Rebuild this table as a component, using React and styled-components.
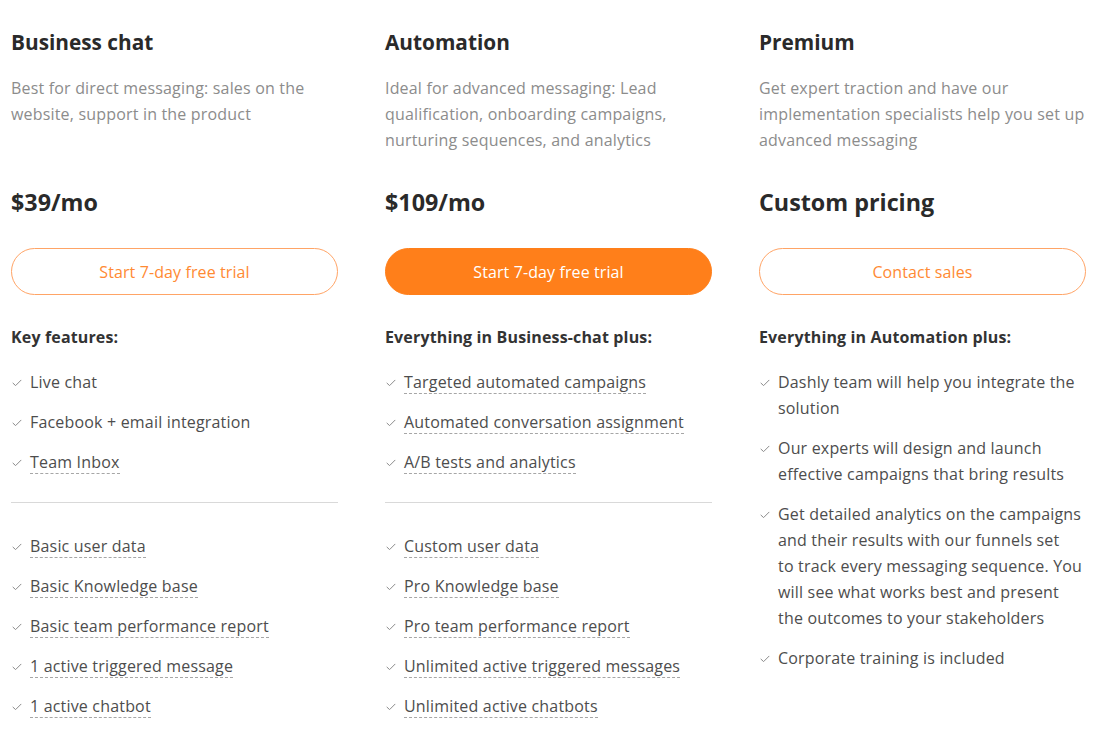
import React from 'react';
import styled, { createGlobalStyle } from 'styled-components';

const GlobalStyle = createGlobalStyle`
  body {
    margin: 0;
    background: #ffffff;
    font-family: "Open Sans", "Liberation Sans", sans-serif;
    color: #333333;
  }
`;

const plans = [
  {
    title: 'Business chat',
    description: 'Best for direct messaging: sales on the website, support in the product',
    price: '$39/mo',
    action: 'Start 7-day free trial',
    primary: false,
    heading: 'Key features:',
    groups: [
      [
        { text: 'Live chat' },
        { text: 'Facebook + email integration' },
        { text: 'Team Inbox', hint: true },
      ],
      [
        { text: 'Basic user data', hint: true },
        { text: 'Basic Knowledge base', hint: true },
        { text: 'Basic team performance report', hint: true },
        { text: '1 active triggered message', hint: true },
        { text: '1 active chatbot', hint: true },
      ],
    ],
  },
  {
    title: 'Automation',
    description: 'Ideal for advanced messaging: Lead qualification, onboarding campaigns, nurturing sequences, and analytics',
    price: '$109/mo',
    action: 'Start 7-day free trial',
    primary: true,
    heading: 'Everything in Business-chat plus:',
    groups: [
      [
        { text: 'Targeted automated campaigns', hint: true },
        { text: 'Automated conversation assignment', hint: true },
        { text: 'A/B tests and analytics', hint: true },
      ],
      [
        { text: 'Custom user data', hint: true },
        { text: 'Pro Knowledge base', hint: true },
        { text: 'Pro team performance report', hint: true },
        { text: 'Unlimited active triggered messages', hint: true },
        { text: 'Unlimited active chatbots', hint: true },
      ],
    ],
  },
  {
    title: 'Premium',
    description: 'Get expert traction and have our implementation specialists help you set up advanced messaging',
    price: 'Custom pricing',
    action: 'Contact sales',
    primary: false,
    heading: 'Everything in Automation plus:',
    groups: [
      [
        { text: 'Dashly team will help you integrate the solution' },
        { text: 'Our experts will design and launch effective campaigns that bring results' },
        { text: 'Get detailed analytics on the campaigns and their results with our funnels set to\u00a0track every messaging sequence. You will see what works best and present the outcomes to your stakeholders' },
        { text: 'Corporate training is included' },
      ],
    ],
  },
];

const CheckIcon = () => (
  <svg width="10" height="8" viewBox="0 0 10 8" fill="none">
    <path d="M1 4.2 L3.6 6.6 L9 1.2" stroke="#8a8a8a" strokeWidth="1" strokeLinecap="round" strokeLinejoin="round" />
  </svg>
);

const Plan = ({ plan }) => (
  <StyledPlan>
    <StyledPlanTitle>{plan.title}</StyledPlanTitle>
    <StyledPlanDescription>{plan.description}</StyledPlanDescription>
    <StyledPlanPrice>{plan.price}</StyledPlanPrice>
    <StyledPlanButton $primary={plan.primary}>{plan.action}</StyledPlanButton>
    <StyledPlanHeading>{plan.heading}</StyledPlanHeading>
    {plan.groups.map((group, i) => (
      <React.Fragment key={i}>
        {i > 0 && <StyledDivider />}
        <StyledFeatures>
          {group.map(item => (
            <StyledFeature key={item.text}>
              <StyledFeatureIcon><CheckIcon /></StyledFeatureIcon>
              <StyledFeatureText>
                {item.hint ? <StyledHint>{item.text}</StyledHint> : item.text}
              </StyledFeatureText>
            </StyledFeature>
          ))}
        </StyledFeatures>
      </React.Fragment>
    ))}
  </StyledPlan>
);

const App = () => (
  <>
    <GlobalStyle />
    <StyledPricing>
      {plans.map(plan => <Plan key={plan.title} plan={plan} />)}
    </StyledPricing>
  </>
);

const StyledPricing = styled.div`
  display: grid;
  grid-template-columns: repeat(3, 327px);
  column-gap: 47px;
  padding: 27px 0 0 11px;
`;

const StyledPlan = styled.div`
  display: flex;
  flex-direction: column;
`;

const StyledPlanTitle = styled.div`
  font-size: 20.8px;
  line-height: 30px;
  font-weight: 700;
  color: #2a2a2a;
`;

const StyledPlanDescription = styled.div`
  margin-top: 18px;
  min-height: 78px;
  font-size: 16px;
  letter-spacing: 0.18px;
  line-height: 26px;
  color: #8c8c8c;
`;

const StyledPlanPrice = styled.div`
  margin-top: 34px;
  font-size: 23.3px;
  line-height: 30px;
  font-weight: 700;
  color: #2a2a2a;
`;

const StyledPlanButton = styled.button`
  margin-top: 31px;
  height: 47px;
  border-radius: 24px;
  border: 1px solid ${props => props.$primary ? '#ff7f1a' : '#ffa466'};
  background: ${props => props.$primary ? '#ff7f1a' : '#ffffff'};
  color: ${props => props.$primary ? '#ffffff' : '#ff8a33'};
  font-family: inherit;
  font-size: 16px;
  letter-spacing: 0.1px;
  cursor: pointer;
`;

const StyledPlanHeading = styled.div`
  margin-top: 30px;
  font-size: 16px;
  letter-spacing: 0.15px;
  line-height: 24px;
  font-weight: 700;
  color: #333333;
`;

const StyledFeatures = styled.ul`
  list-style: none;
  margin: 20px 0 0;
  padding: 0;
  display: flex;
  flex-direction: column;
  gap: 14px;
`;

const StyledFeature = styled.li`
  display: flex;
  align-items: flex-start;
  font-size: 16px;
  letter-spacing: 0.18px;
  line-height: 26px;
  color: #4d4d4d;
`;

const StyledFeatureIcon = styled.span`
  flex: 0 0 19px;
  display: flex;
  padding-top: 10px;
  padding-left: 1px;
  box-sizing: border-box;
`;

const StyledFeatureText = styled.span`
  flex: 1;
`;

const StyledHint = styled.span`
  border-bottom: 1px dashed #a6a6a6;
`;

const StyledDivider = styled.div`
  margin-top: 27px;
  height: 1px;
  background: #d9d9d9;
  & + ${StyledFeatures} {
    margin-top: 30px;
  }
`;

export default App;
